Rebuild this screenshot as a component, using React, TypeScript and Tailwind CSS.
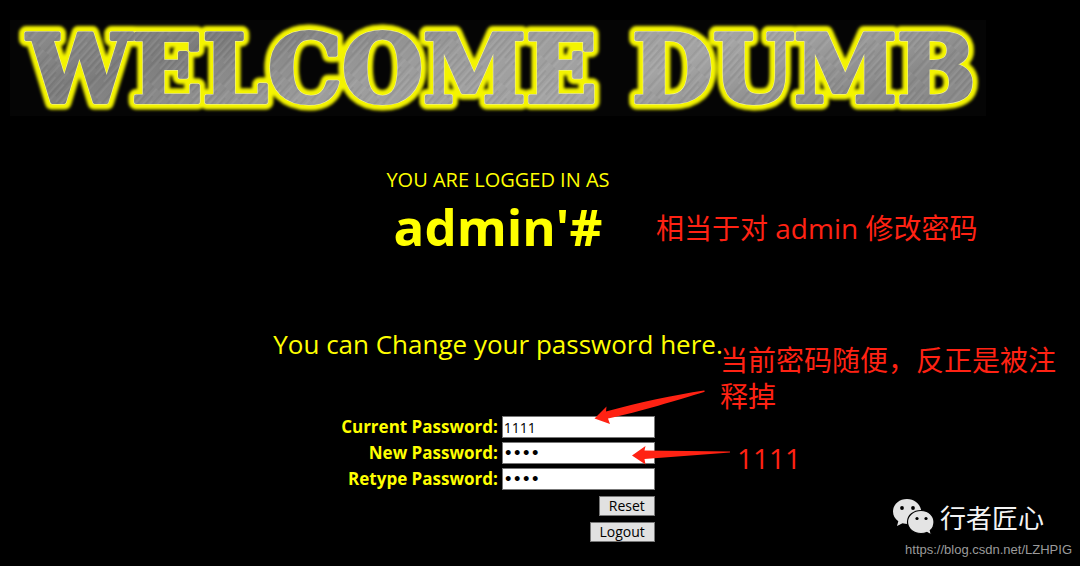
import type { ReactNode } from "react";

const fields = [
  { id: "current", label: "Current Password:", type: "text", font: "text-[14px]" },
  { id: "new", label: "New Password:", type: "password", font: "font-['DejaVu_Sans',sans-serif] text-[14px] font-bold" },
  { id: "retype", label: "Retype Password:", type: "password", font: "font-['DejaVu_Sans',sans-serif] text-[14px] font-bold" },
];

function Words() {
  return (
    <>
      <tspan x="302" textAnchor="middle">WELCOME</tspan>
      <tspan x="794" textAnchor="middle">DUMB</tspan>
    </>
  );
}

function Banner() {
  return (
    <h1 className="bg-[#050505]">
      <svg
        viewBox="0 0 976 96"
        className="block w-full overflow-visible font-['DejaVu_Serif',serif] text-[93px] font-bold"
        strokeLinejoin="round"
      >
        <defs>
          <linearGradient id="sheen" x1="0" y1="0" x2="1" y2="0.3">
            <stop offset="0" stopColor="#8f8f8f" />
            <stop offset="0.25" stopColor="#7c7c7c" />
            <stop offset="0.5" stopColor="#9c9c9c" />
            <stop offset="0.75" stopColor="#a4a4a4" />
            <stop offset="1" stopColor="#8a8a8a" />
          </linearGradient>
          <pattern id="steel" width="976" height="96" patternUnits="userSpaceOnUse">
            <rect width="976" height="96" fill="url(#sheen)" />
            <rect width="976" height="96" fill="url(#scratches)" />
          </pattern>
          <pattern
            id="scratches"
            width="11"
            height="47"
            patternUnits="userSpaceOnUse"
            patternTransform="rotate(42)"
          >
            <path d="M1 0v30M6 12v35" stroke="#ffffff" strokeOpacity="0.12" />
            <path d="M3 8v39M8 0v26" stroke="#000000" strokeOpacity="0.1" />
          </pattern>
          <filter id="glow" x="-5%" y="-30%" width="110%" height="160%">
            <feGaussianBlur stdDeviation="1.8" />
          </filter>
        </defs>
        <g aria-hidden="true">
          <text y="82" fill="#ffff00" stroke="#f4f400" strokeWidth="15" filter="url(#glow)">
            <Words />
          </text>
          <text y="82" fill="#f4f4a0" stroke="#f4f4a0" strokeWidth="5">
            <Words />
          </text>
        </g>
        <text y="82" fill="url(#steel)" stroke="url(#steel)" strokeWidth="4">
          <Words />
        </text>
      </svg>
    </h1>
  );
}

function Note({ className, children }: { className: string; children: ReactNode }) {
  return (
    <p
      className={`absolute font-['Open_Sans','Noto_Sans_CJK_SC',sans-serif] text-[28px] leading-9 text-[#ff2213] ${className}`}
    >
      {children}
    </p>
  );
}

function Arrows() {
  return (
    <svg
      viewBox="0 0 140 80"
      className="pointer-events-none absolute top-[386px] left-[594px] w-[140px]"
      fill="#ff2213"
      aria-hidden="true"
    >
      <path d="M0.500 32.500L12.500 20.500L12 25.500C45 16.500 80 9 110 4.500L111 5L110 6C85 13.500 45 26 14 32.500L16 38Z" />
      <path d="M38 69.500L51.500 60L50.500 64.500L136 65.500V66.500L50.500 73L51.500 78.500Z" />
    </svg>
  );
}

function Watermark() {
  return (
    <div className="absolute right-2 bottom-1 flex flex-col items-end">
      <div className="mr-7 mb-0.5 flex items-center gap-1.5">
        <svg viewBox="0 0 42 38" className="w-[42px]" aria-hidden="true">
          <path
            fill="#e4e4e4"
            d="M15 1C7 1 1 6.500 1 13.500C1 17.500 3 21 6.300 23.300L5 28L10.500 25.200C16 26.800 21 26 25 23C29 20 30 16 29 11.500C27.500 5.500 22 1 15 1Z"
          />
          <path
            fill="#e4e4e4"
            stroke="#000000"
            strokeWidth="1.200"
            d="M29 12.500C21.500 12.500 15.500 17.500 15.500 24C15.500 31 22 35.500 29 35.500C31 35.500 33 35.200 34.800 34.500L39.500 37L38.300 32.500C40.800 30.500 42 27.500 42 24C42 17.500 36.500 12.500 29 12.500Z"
          />
          <g fill="#000000">
            <circle cx="10" cy="10" r="1.900" />
            <circle cx="21" cy="10" r="1.900" />
            <circle cx="25" cy="20.500" r="1.600" />
            <circle cx="34" cy="20.500" r="1.600" />
          </g>
        </svg>
        <span className="font-['Noto_Sans_CJK_SC',sans-serif] text-[26px] leading-9 text-[#f4f4f4]">
          行者匠心
        </span>
      </div>
      <a
        href="https://blog.csdn.net/LZHPIG"
        className="font-['Liberation_Sans',sans-serif] text-[13px] leading-6 text-[#9b9b9b]"
      >
        https://blog.csdn.net/LZHPIG
      </a>
    </div>
  );
}

export default function App() {
  const control = "border border-[#777777] text-black";
  return (
    <div className="relative min-h-screen bg-black pt-5 pr-[94px] pb-6 pl-[10px] font-['Open_Sans',sans-serif] text-[#ffff00]">
      <main className="flex flex-col items-center">
        <div className="w-full">
          <Banner />
        </div>
        <p className="mt-[50px] text-[20px] leading-7">YOU ARE LOGGED IN AS</p>
        <p className="text-[51px] leading-[64px] font-bold">admin'#</p>
        <h2 className="mt-[66px] text-[26px] leading-10">You can Change your password here.</h2>
        <form className="mt-[52px] flex flex-col items-end gap-1.5" onSubmit={(e) => e.preventDefault()}>
          <div className="flex flex-col gap-1">
            {fields.map((f) => (
              <div key={f.id} className="flex items-center justify-end gap-1">
                <label htmlFor={f.id} className="text-right text-[17px] leading-[22px] font-bold whitespace-nowrap">
                  {f.label}
                </label>
                <input
                  id={f.id}
                  type={f.type}
                  defaultValue="1111"
                  className={`h-[22px] w-[153px] bg-white px-px ${f.font} ${control}`}
                />
              </div>
            ))}
          </div>
          <button type="reset" className={`h-5 bg-[#e1e1e1] px-[9px] text-[14px] leading-4 ${control}`}>
            Reset
          </button>
          <button type="button" className={`h-5 bg-[#e1e1e1] px-[9px] text-[14px] leading-4 ${control}`}>
            Logout
          </button>
        </form>
      </main>
      <Note className="top-[210px] left-[656px]">相当于对 admin 修改密码</Note>
      <Note className="top-[342px] left-[720px] w-[340px]">当前密码随便，反正是被注释掉</Note>
      <Note className="top-[440px] left-[737px]">1111</Note>
      <Arrows />
      <Watermark />
    </div>
  );
}
